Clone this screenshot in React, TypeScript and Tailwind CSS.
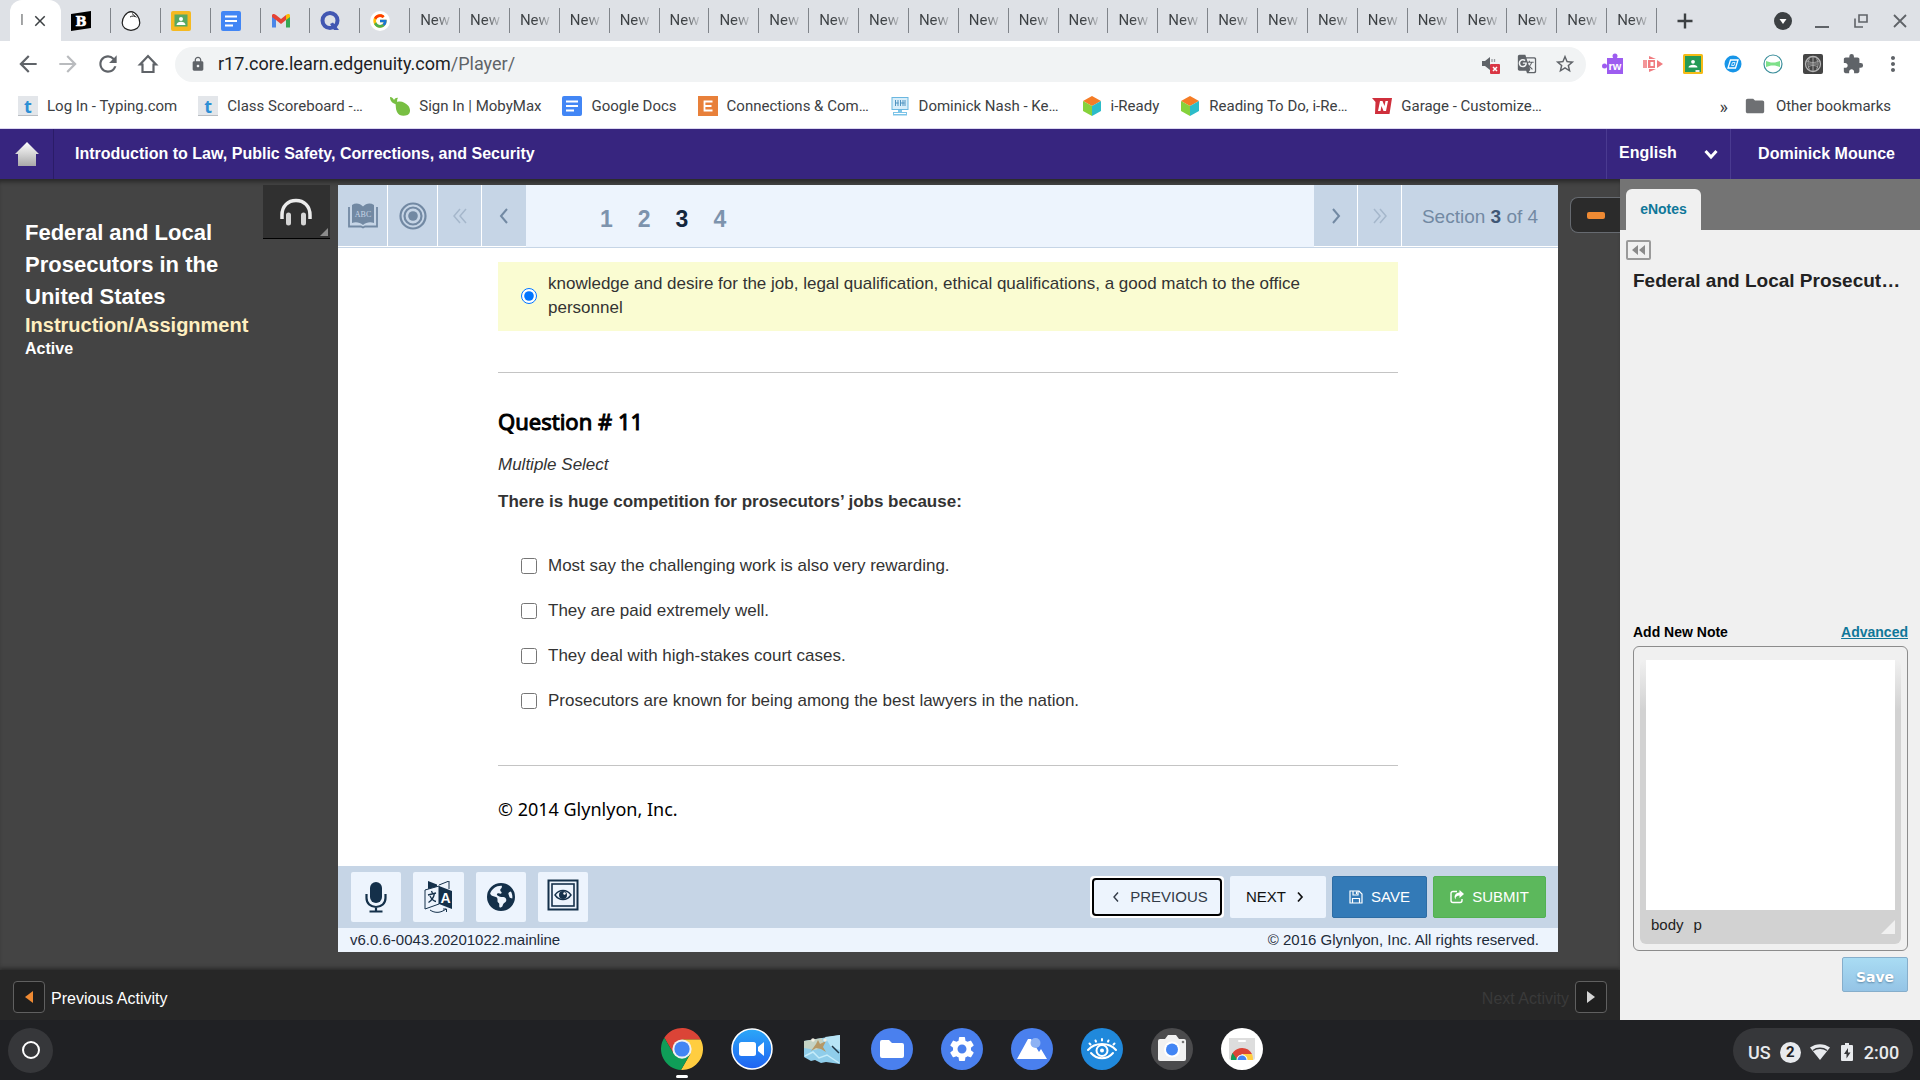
import { useState } from 'react'
import type { ReactNode } from 'react'
import { FaEarthAmericas } from 'react-icons/fa6'
import { FcGoogle } from 'react-icons/fc'
import {
  MdArrowBack,
  MdArrowForward,
  MdClose,
  MdExtension,
  MdFolder,
  MdGTranslate,
  MdLock,
  MdMoreVert,
  MdRefresh,
  MdSettings,
  MdStarBorder,
} from 'react-icons/md'

const NEW_TABS = Array.from({ length: 25 }, (_, i) => i)

const OPTIONS = [
  'Most say the challenging work is also very rewarding.',
  'They are paid extremely well.',
  'They deal with high-stakes court cases.',
  'Prosecutors are known for being among the best lawyers in the nation.',
]

/* ---------- small icons ---------- */

function DocsIcon() {
  return (
    <svg className="w-5 h-5" viewBox="0 0 20 20">
      <rect width="20" height="20" rx="2" fill="#4286f5" />
      <path d="M4 5.500h12M4 10h12M4 14.500h8" stroke="#fff" strokeWidth="2" />
    </svg>
  )
}

function ClassroomIcon() {
  return (
    <svg className="w-5 h-5" viewBox="0 0 20 20">
      <rect width="20" height="20" rx="1.5" fill="#f5bb16" />
      <rect x="2" y="2" width="16" height="16" fill="#249a55" />
      <circle cx="10" cy="7.8" r="1.9" fill="#fff" />
      <path d="M5.500 13.500c0-3.600 9-3.600 9 0z" fill="#fff" />
      <path d="M12.500 16h4v2h-4z" fill="#e8eef0" />
    </svg>
  )
}

function ClassroomTabIcon() {
  return (
    <svg className="w-5 h-5" viewBox="0 0 20 20">
      <rect width="20" height="20" rx="2" fill="#f5b921" />
      <rect x="3.500" y="3.500" width="13" height="12" fill="#57a863" />
      <circle cx="10" cy="8" r="2" fill="#fff" />
      <path d="M5.500 14c0-4.500 9-4.500 9 0z" fill="#fff" />
    </svg>
  )
}

function TypingIcon() {
  return (
    <span className="flex w-5 h-5 items-center justify-center bg-[#e3e6ea] border-b border-[#b9bdc2] text-[18px] leading-5 font-bold text-[#2d8fd5] font-['Open_Sans',sans-serif]">
      t
    </span>
  )
}

function CubeIcon() {
  return (
    <svg className="w-5 h-5" viewBox="0 0 20 20">
      <path d="M10 0l9 5-9 5-9-5z" fill="#f57c26" />
      <path d="M1 5l9 5v10l-9-5z" fill="#86d23b" />
      <path d="M19 5l-9 5v10l9-5z" fill="#2cbcc9" />
    </svg>
  )
}

function MobyIcon() {
  return (
    <svg className="w-5 h-5" viewBox="0 0 20 20">
      <path d="M0 1c2 0 3.500 1.500 4 3 1-1.500 2.500-2.500 4-2-1 1-1 2.500-.7 4 3.500-1.500 8 .5 10.700 3.500 3 3.500 2.500 8-.5 9.500-4 1.500-8.500 1-10.500-3C5.500 13 6 10 5.500 8 3 7.500 0 5.500 0 1z" fill="#78bf43" />
    </svg>
  )
}

function ComputerIcon() {
  return (
    <svg className="w-5 h-5" viewBox="0 0 20 20">
      <rect x="2" y="1.500" width="16" height="12" fill="#d8eefa" stroke="#6bb7e0" />
      <path d="M5.500 4v6M8 4v6M5.500 7h3M10.500 4v6M13 4v6M15 4v6M10.500 7h4" stroke="#4f93c0" />
      <path d="M8 14h4v2H8zM3 16h14v3.500H3z" fill="#7cc4e8" />
      <path d="M4 17.500h12" stroke="#fff" />
    </svg>
  )
}

function NitroIcon() {
  return (
    <svg className="w-5 h-5" viewBox="0 0 20 20">
      <path d="M0 2h20l-2.500 16H3L3.500 6z" fill="#cf2f3c" />
      <path d="M6 15L8 5h2.500l2 5 1-5H16l-2 10h-2.500l-2-5-1 5z" fill="#fff" />
    </svg>
  )
}

function LetterE() {
  return (
    <svg className="w-5 h-5" viewBox="0 0 20 20">
      <rect width="20" height="20" fill="#e8803a" />
      <path d="M14.500 5.500h-8v9h8M6.500 10h7" fill="none" stroke="#fff" strokeWidth="1.800" />
    </svg>
  )
}

function BlooketIcon() {
  return (
    <svg className="w-5 h-5" viewBox="0 0 20 20">
      <path d="M0 3l20-3v17L0 20z" fill="#000" />
      <text x="10" y="15" textAnchor="middle" fontSize="13" fontWeight="700" fontFamily="DejaVu Serif" fill="#fff" stroke="#fff" strokeWidth=".6">B</text>
    </svg>
  )
}

function EggIcon() {
  return (
    <svg className="w-5 h-5" viewBox="0 0 20 20">
      <path d="M10 .7C5 1 1 7 1.200 12c.2 4.500 4 7.300 8.800 7.300s8.600-2.800 8.800-7.300C19 7 15 1 10 .7z" fill="#fff" stroke="#222" strokeWidth="1.200" />
      <path d="M9 6c2-1.500 5-1 6.500.2M11 2.500l3 2.800" fill="none" stroke="#222" />
    </svg>
  )
}

function GmailIcon() {
  return (
    <svg className="w-5 h-5" viewBox="0 0 20 20">
      <path d="M1 5v11.500h4V8z" fill="#4a86e8" />
      <path d="M19 5v11.500h-4V8z" fill="#34a853" />
      <path d="M15 4v5l4-3V4.500C19 3 17 2.500 15 4z" fill="#fbbc04" />
      <path d="M1 6V4.500C1 3 3 2.500 5 4l5 4 5-4v5l-5 4-5-4z" fill="#e54335" />
    </svg>
  )
}

function QIcon() {
  return (
    <svg className="w-5 h-5" viewBox="0 0 20 20">
      <circle cx="10" cy="9.500" r="7.500" fill="none" stroke="#4257b2" strokeWidth="4" />
      <path d="M10 13l3-1.500 6 7.500h-5z" fill="#4257b2" />
    </svg>
  )
}

const ICON_TABS: { id: string; icon: ReactNode }[] = [
  { id: 'Blooket', icon: <BlooketIcon /> },
  { id: 'Egg', icon: <EggIcon /> },
  { id: 'Classroom', icon: <ClassroomTabIcon /> },
  { id: 'Docs', icon: <DocsIcon /> },
  { id: 'Gmail', icon: <GmailIcon /> },
  { id: 'Quizlet', icon: <QIcon /> },
  { id: 'Google', icon: <span className="block rounded-full bg-white p-0.5"><FcGoogle className="w-4 h-4" /></span> },
]

const BOOKMARKS: { label: string; icon: ReactNode; cut?: boolean }[] = [
  { label: 'Log In - Typing.com', icon: <TypingIcon /> },
  { label: 'Class Scoreboard -…', icon: <TypingIcon />, cut: true },
  { label: 'Sign In | MobyMax', icon: <MobyIcon /> },
  { label: 'Google Docs', icon: <DocsIcon /> },
  { label: 'Connections & Com…', icon: <LetterE />, cut: true },
  { label: 'Dominick Nash - Ke…', icon: <ComputerIcon />, cut: true },
  { label: 'i-Ready', icon: <CubeIcon /> },
  { label: 'Reading To Do, i-Re…', icon: <CubeIcon />, cut: true },
  { label: 'Garage - Customize…', icon: <NitroIcon />, cut: true },
]

const EXTENSIONS: { id: string; icon: ReactNode }[] = [
  {
    id: 'Read and write',
    icon: (
      <svg className="w-5 h-5 overflow-visible" viewBox="0 0 20 20">
        <path d="M4 4h16v16H4z" fill="#9d5cf0" />
        <circle cx="12" cy="2" r="2.500" fill="#9d5cf0" />
        <circle cx="1.500" cy="12" r="2.500" fill="#9d5cf0" />
        <text x="12" y="15.500" textAnchor="middle" fontSize="11" fontWeight="700" fontFamily="Liberation Sans" fill="#fff">rw</text>
      </svg>
    ),
  },
  {
    id: 'Screencastify',
    icon: (
      <svg className="w-5 h-5" viewBox="0 0 20 20" fill="#f07c80">
        <path d="M0 6h4v8H0z" opacity=".8" />
        <path d="M5 6h7v8H5zM7.500 8v4h3V8z" fillRule="evenodd" />
        <path d="M6 2l7 3H6zM6 18l7-3H6z" />
        <path d="M14 6l6 4-6 4z" />
      </svg>
    ),
  },
  { id: 'Share to Classroom', icon: <ClassroomIcon /> },
  {
    id: 'Nearpod',
    icon: (
      <svg className="w-5 h-5" viewBox="0 0 20 20">
        <circle cx="10" cy="10" r="8.500" fill="#1795e8" />
        <path d="M7.500 6H15l-2.500 8H5z" fill="none" stroke="#fff" strokeWidth="1.300" />
        <path d="M9.500 8.500H12l-1 3H8.500z" fill="none" stroke="#cfeaff" />
      </svg>
    ),
  },
  {
    id: 'Bow',
    icon: (
      <svg className="w-5 h-5" viewBox="0 0 20 20">
        <circle cx="10" cy="10" r="9" fill="#fff" stroke="#3d8f9c" strokeWidth="1.200" />
        <path d="M3 7l5 1.500h4L17 7v6l-5-1.500H8L3 13z" fill="#7fe08a" />
      </svg>
    ),
  },
  {
    id: 'Globe',
    icon: (
      <svg className="w-5 h-5" viewBox="0 0 20 20">
        <rect width="20" height="20" rx="2" fill="#454545" />
        <circle cx="10" cy="10" r="7.500" fill="none" stroke="#b5b5b5" strokeWidth="1.300" />
        <path d="M4 7c4 2 8 2 12 0M5 13c3-2 7-2 10 0M10 3v14M6.500 4.500c-2 4-2 7 0 11M13.500 4.500c2 4 2 7 0 11M6 10h8" fill="none" stroke="#a5a5a5" />
      </svg>
    ),
  },
  { id: 'Extensions', icon: <MdExtension className="w-[22px] h-[22px]" /> },
  { id: 'Menu', icon: <MdMoreVert className="w-6 h-6" /> },
]

function Chevron({ dir, double }: { dir: 'left' | 'right'; double?: boolean }) {
  return (
    <svg className="w-5 h-5" viewBox="0 0 20 20" fill="none" stroke="currentColor" strokeWidth="2">
      {dir === 'left' && !double && <path d="M13 3l-6 7 6 7" />}
      {dir === 'right' && !double && <path d="M7 3l6 7-6 7" />}
      {dir === 'left' && double && <path d="M10 3l-6 7 6 7M16 3l-6 7 6 7" strokeWidth="1.500" />}
      {dir === 'right' && double && <path d="M4 3l6 7-6 7M10 3l6 7-6 7" strokeWidth="1.500" />}
    </svg>
  )
}

/* ---------- browser chrome ---------- */

function TabStrip() {
  return (
    <div className="flex h-[41px] bg-[#dee1e6] text-[15px] text-[#3c4043]">
      <div className="flex flex-1 min-w-0">
        <div className="ml-[10px] w-[51px] shrink-0 rounded-t-xl bg-white flex items-center justify-between pl-[10px] pr-3">
          <span className="bg-linear-to-r from-[#3c4043] to-[#bbbbbb] bg-clip-text text-transparent">I</span>
          <button aria-label="Close tab"><MdClose className="w-[18px] h-[18px]" /></button>
        </div>
        {ICON_TABS.map(({ id, icon }) => (
          <div key={id} className="flex flex-1 min-w-0 items-center">
            <button aria-label={id} className="flex flex-1 pl-[10px]">{icon}</button>
            <span className="h-[25px] w-px bg-[#80848a]" />
          </div>
        ))}
        {NEW_TABS.map((n) => (
          <div key={n} className="flex flex-1 min-w-0 items-center">
            <button className="flex-1 min-w-0 pl-[10px] text-left">
              <span className="bg-linear-to-r from-[#3c4043] from-50% to-[#3c404333] bg-clip-text text-transparent">New</span>
            </button>
            <span className="h-[25px] w-px bg-[#80848a]" />
          </div>
        ))}
      </div>
      <div className="flex w-[263px] items-center justify-between pl-[19px] pr-[11px]">
        <button aria-label="New tab">
          <svg className="w-[18px] h-[18px]" viewBox="0 0 18 18"><path d="M9 1.500v15M1.500 9h15" stroke="#3c4043" strokeWidth="2.400" /></svg>
        </button>
        <div className="flex items-center gap-[21px]">
          <button aria-label="Search tabs">
            <svg className="w-[18px] h-[18px]" viewBox="0 0 18 18">
              <circle cx="9" cy="9" r="9" fill="#3c4043" />
              <path d="M5.500 7h7L9 12z" fill="#fff" />
            </svg>
          </button>
          <button aria-label="Minimize">
            <svg className="w-[18px] h-[18px]" viewBox="0 0 18 18"><path d="M2 15h14" stroke="#5f6368" strokeWidth="2" /></svg>
          </button>
          <button aria-label="Restore">
            <svg className="w-[18px] h-[18px]" viewBox="0 0 18 18" fill="none" stroke="#5f6368" strokeWidth="1.600">
              <path d="M7 3h8v7H7zM3 6.500V15h8" />
            </svg>
          </button>
          <button aria-label="Close">
            <svg className="w-[18px] h-[18px]" viewBox="0 0 18 18"><path d="M3 3l12 12M15 3L3 15" stroke="#5f6368" strokeWidth="1.800" /></svg>
          </button>
        </div>
      </div>
    </div>
  )
}

function AddressBar() {
  return (
    <div className="flex h-[46px] items-center bg-white text-[#5f6368] pl-[15px] pr-[7px]">
      <div className="flex gap-[14px] pr-[14px]">
        <button aria-label="Back"><MdArrowBack className="w-[26px] h-[26px]" /></button>
        <button aria-label="Forward" className="text-[#b9bbbe]"><MdArrowForward className="w-[26px] h-[26px]" /></button>
        <button aria-label="Reload"><MdRefresh className="w-[26px] h-[26px]" /></button>
        <button aria-label="Home">
          <svg className="w-[26px] h-[26px]" viewBox="0 0 26 26" fill="none" stroke="currentColor" strokeWidth="2.200">
            <path d="M5 13.500l8-8.500 8 8.500h-2.500V21h-11v-7.500z" />
          </svg>
        </button>
      </div>
      <div className="flex h-[35px] flex-1 items-center rounded-full bg-[#f1f3f4] pl-[15px] pr-[10px]">
        <MdLock className="w-4 h-4" />
        <div className="flex-1 pl-3 text-[18px] leading-6">
          <span className="text-[#202124]">r17.core.learn.edgenuity.com</span>/Player/
        </div>
        <div className="flex items-center gap-[17px]">
          <button aria-label="Sound blocked">
            <svg className="w-5 h-5" viewBox="0 0 20 20">
              <path d="M2 7h3l5-4v13l-5-4H2z" fill="#5f6368" />
              <path d="M12 5v3M14.500 5v3" stroke="#9a9da1" strokeWidth="1.300" />
              <rect x="10" y="10" width="10" height="10" rx="1" fill="#d93644" />
              <path d="M13 13l4 4M17 13l-4 4" stroke="#fff" strokeWidth="1.500" />
            </svg>
          </button>
          <button aria-label="Translate"><MdGTranslate className="w-5 h-5" /></button>
          <button aria-label="Bookmark"><MdStarBorder className="w-[22px] h-[22px]" /></button>
        </div>
      </div>
      <div className="flex pl-[7px]">
        {EXTENSIONS.map(({ id, icon }) => (
          <button key={id} aria-label={id} className="flex w-10 items-center justify-center">{icon}</button>
        ))}
      </div>
    </div>
  )
}

function BookmarkBar() {
  return (
    <div className="flex h-[42px] items-center justify-between border-b border-[#dcd7f0] bg-white pl-[18px] pr-[29px] pb-[3px] text-[15px] text-[#3c4043]">
      <div className="flex gap-[21px]">
        {BOOKMARKS.map(({ label, icon, cut }) => (
          <a key={label} href="#" className="flex items-center gap-[9px] whitespace-nowrap">
            {icon}
            <span className={cut ? 'w-[142px]' : ''}>{label}</span>
          </a>
        ))}
      </div>
      <div className="flex items-center gap-4">
        <button aria-label="More bookmarks" className="text-[18px]">»</button>
        <a href="#" className="flex items-center gap-[10px]">
          <MdFolder className="w-[22px] h-[22px] text-[#6e7073]" />
          Other bookmarks
        </a>
      </div>
    </div>
  )
}

/* ---------- course player ---------- */

function CourseHeader() {
  return (
    <header className="flex h-[50px] items-stretch bg-[#37257f] text-[16px] font-bold text-white">
      <a href="#" aria-label="Home" className="flex w-[54px] items-center justify-center border-r border-[#2b1c68]">
        <svg className="w-6 h-6" viewBox="0 0 24 24">
          <defs>
            <linearGradient id="roof" x1="0" y1="0" x2="0" y2="1">
              <stop offset="0" stopColor="#fff" />
              <stop offset="1" stopColor="#a9a9a9" />
            </linearGradient>
          </defs>
          <path d="M12 0l12 12h-3v12H3V12H0z" fill="url(#roof)" />
        </svg>
      </a>
      <h1 className="flex-1 self-center pl-[21px]">Introduction to Law, Public Safety, Corrections, and Security</h1>
      <label className="relative flex w-[125px] items-center border-x border-[#4a3a90]">
        <span className="sr-only">Language</span>
        <select className="h-full w-full appearance-none pl-3 pb-0.5 font-bold outline-none">
          <option>English</option>
        </select>
        <svg className="pointer-events-none absolute right-3 w-[14px] h-[14px]" viewBox="0 0 14 14" fill="none" stroke="#fff" strokeWidth="3">
          <path d="M1.500 4L7 10l5.500-6" />
        </svg>
      </label>
      <span className="self-center pl-[27px] pr-[25px]">Dominick Mounce</span>
    </header>
  )
}

function LessonInfo() {
  return (
    <aside className="flex w-[338px] shrink-0 items-start justify-between pl-[25px] pr-2">
      <div className="pt-8 font-bold text-white">
        <h2 className="w-[220px] text-[22px] leading-8">Federal and Local Prosecutors in the United States</h2>
        <p className="text-[20px] leading-6 text-[#ffefc0]">Instruction/Assignment</p>
        <p className="text-[16px] leading-6">Active</p>
      </div>
      <button aria-label="Audio" className="relative -ml-4 flex h-[54px] w-[67px] shrink-0 items-center justify-center border-b border-black bg-[#303030] pr-0.5">
        <svg className="w-8 h-7" viewBox="0 0 32 28" fill="none">
          <path d="M2 21v-4C2 8 8 2.500 16 2.500S30 8 30 17v4" stroke="#ececec" strokeWidth="3.500" />
          <path d="M8.500 17v8M23.500 17v8" stroke="#d5d5d5" strokeWidth="5" strokeLinecap="round" />
        </svg>
        <svg className="absolute right-0.5 bottom-0.5 w-2 h-2" viewBox="0 0 8 8"><path d="M8 0v8H0z" fill="#8c8c8c" /></svg>
      </button>
    </aside>
  )
}

function PlayerToolbar() {
  const [page, setPage] = useState(3)

  return (
    <div className="flex h-[63px] shrink-0 border-b border-[#c6d5e6] bg-[#edf4fd] text-[#7289a3]">
      <div className="flex gap-px bg-white pb-px">
        <button aria-label="Dictionary" className="flex w-[49px] items-center justify-center bg-[#c6d5e6]">
          <svg className="w-[30px] h-[26px]" viewBox="0 0 30 26">
            <path d="M4 2c4-2.500 8-1.500 11 1.500C18 .5 22-.5 26 2v18c-4-1.500-8-.5-11 2-3-2.500-7-3.500-11-2z" fill="#7289a3" />
            <path d="M1 4v19.500h12l2 1 2-1h12V4" fill="none" stroke="#7289a3" strokeWidth="1.800" />
            <text x="15" y="14" textAnchor="middle" fontSize="8" fontFamily="Liberation Serif" fill="#c6d5e6">ABC</text>
          </svg>
        </button>
        <button aria-label="Objectives" className="flex w-[49px] items-center justify-center bg-[#c6d5e6]">
          <svg className="w-7 h-7" viewBox="0 0 28 28" fill="none" stroke="#7289a3">
            <circle cx="14" cy="14" r="12.500" strokeWidth="2.200" />
            <circle cx="14" cy="14" r="8.500" strokeWidth="2.200" />
            <circle cx="14" cy="14" r="4.800" fill="#7289a3" stroke="none" />
          </svg>
        </button>
        <button aria-label="First" className="flex w-[43px] items-center justify-center bg-[#c6d5e6] text-[#a5b7cb]"><Chevron dir="left" double /></button>
        <button aria-label="Previous section" className="flex w-[44px] items-center justify-center bg-[#c6d5e6]"><Chevron dir="left" /></button>
      </div>
      <nav className="flex flex-1 items-center gap-[25px] pt-1.5 pl-[74px] text-[23px] font-bold">
        {[1, 2, 3, 4].map((n) => (
          <button key={n} onClick={() => setPage(n)} className={n === page ? 'text-[#14273d]' : 'text-[#7d93ad]'}>{n}</button>
        ))}
      </nav>
      <div className="flex gap-px bg-white pb-px">
        <button aria-label="Next section" className="flex w-[43px] items-center justify-center bg-[#c6d5e6]"><Chevron dir="right" /></button>
        <button aria-label="Last" className="flex w-[43px] items-center justify-center bg-[#c6d5e6] text-[#a5b7cb]"><Chevron dir="right" double /></button>
        <div className="flex w-[156px] items-center justify-center bg-[#c6d5e6] pt-1 text-[19px]">
          <span>Section <b className="text-[#3f5775]">3</b> of 4</span>
        </div>
      </div>
    </div>
  )
}

function Question() {
  return (
    <div className="flex-1 overflow-hidden bg-white px-40 pt-[14px] text-[17px] leading-6 text-[#333333]">
      <label className="flex items-center gap-[11px] bg-[#fafcd2] pt-[10px] pr-10 pb-[11px] pl-[23px]">
        <input type="radio" name="q10" defaultChecked className="w-4 h-4 shrink-0" />
        knowledge and desire for the job, legal qualification, ethical qualifications, a good match to the office personnel
      </label>
      <hr className="mt-[41px] border-[#c4c4c4]" />
      <h2 className="mt-8 font-['Noto_Sans',sans-serif] text-[22px] leading-8 text-black [-webkit-text-stroke:1px_black]">Question # 11</h2>
      <p className="mt-4 italic">Multiple Select</p>
      <p className="mt-[13px] font-bold">There is huge competition for prosecutors’ jobs because:</p>
      <div className="mt-10 flex flex-col items-start gap-[21px] pl-[23px]">
        {OPTIONS.map((text) => (
          <label key={text} className="flex items-center gap-[11px]">
            <input type="checkbox" className="w-4 h-4 shrink-0" />
            {text}
          </label>
        ))}
      </div>
      <hr className="mt-[52px] border-[#c4c4c4]" />
      <p className="mt-[31px] font-['Noto_Sans',sans-serif] text-[18px] text-black">© 2014 Glynlyon, Inc.</p>
    </div>
  )
}

function PlayerActions() {
  return (
    <div className="flex h-[62px] shrink-0 items-center justify-between bg-[#c6d5e6] pl-[13px] pr-3 text-[15px]">
      <div className="flex gap-3 text-[#14304a]">
        <button aria-label="Record" className="flex h-[50px] w-[50px] items-center justify-center rounded-xs bg-[#edf4fd]">
          <svg className="w-[22px] h-8" viewBox="0 0 22 32">
            <rect x="5" y="1" width="12" height="21" rx="6" fill="currentColor" />
            <path d="M1.500 13v4c0 5.500 4 9 9.500 9s9.500-3.500 9.500-9v-4M11 26v4.500M4.500 30.500h13" fill="none" stroke="currentColor" strokeWidth="2.200" />
          </svg>
        </button>
        <button aria-label="Translate" className="flex h-[50px] w-[51px] items-center justify-center rounded-xs bg-[#edf4fd]">
          <svg className="w-8 h-8" viewBox="0 0 32 32">
            <path d="M16 5l13 5v18l-13-5z" fill="#14304a" />
            <path d="M16 5L2 9v19l14-5z" fill="#edf4fd" stroke="#14304a" />
            <path d="M5 0l9 3.500v2L5 8z" fill="#14304a" />
            <path d="M16 4l10-4v8" fill="none" stroke="#14304a" />
            <path d="M5 14l8-2M8.500 10l1 2.500M11.500 12.500c-1 5-3 7-6 9M7 15c1.500 3 3.500 5 6 5.500" fill="none" stroke="#14304a" strokeWidth="1.300" />
            <text x="22.500" y="22" textAnchor="middle" fontSize="14" fontWeight="700" fontFamily="Liberation Sans" fill="#fff">A</text>
            <path d="M7 29c5 3.500 11 3 16-1M20 28h3.500v3" fill="none" stroke="#14304a" />
          </svg>
        </button>
        <button aria-label="Web" className="flex h-[50px] w-[50px] items-center justify-center rounded-xs bg-[#edf4fd]"><FaEarthAmericas className="w-7 h-7" /></button>
        <button aria-label="Masking" className="flex h-[50px] w-[50px] items-center justify-center rounded-xs bg-[#edf4fd] pb-1">
          <svg className="w-8 h-8" viewBox="0 0 32 32" fill="none" stroke="#14304a">
            <rect x="1.500" y="1.500" width="29" height="29" strokeWidth="2" />
            <rect x="5" y="5" width="22" height="22" strokeWidth="1.600" />
            <path d="M8 16c4-6 12-6 16 0-4 6-12 6-16 0z" strokeWidth="1.400" />
            <circle cx="16" cy="16" r="4" fill="#14304a" stroke="none" />
            <circle cx="17.500" cy="14.500" r="1.200" fill="#fff" stroke="none" />
          </svg>
        </button>
      </div>
      <div className="flex gap-1.5">
        <button className="h-[42px] w-[134px] rounded-sm bg-white p-0.5 text-[#333b47]">
          <span className="flex h-full items-center justify-center gap-[10px] rounded-sm border-2 border-black bg-[#edf4fd] pl-1.5">
            <svg className="w-2 h-3" viewBox="0 0 8 12"><path d="M6 1.500L2 6l4 4.500" fill="none" stroke="currentColor" strokeWidth="1.400" /></svg>
            PREVIOUS
          </span>
        </button>
        <button className="flex h-[42px] w-[96px] items-center justify-center gap-[10px] rounded-xs bg-[#edf4fd] pr-1.5 text-[#111111]">
          NEXT
          <svg className="w-2 h-3" viewBox="0 0 8 12"><path d="M2 1.500L6 6l-4 4.500" fill="none" stroke="currentColor" strokeWidth="1.700" /></svg>
        </button>
        <button className="flex h-[42px] w-[95px] items-center justify-center gap-2 rounded-xs border border-[#2e6da4] bg-[#337ab7] text-white">
          <svg className="w-[14px] h-[14px]" viewBox="0 0 14 14" fill="none" stroke="#fff" strokeWidth="1.200">
            <path d="M1 1h9l3 3v9H1zM4 1v4h5V1M3.500 13V8.500h7V13" />
            <path d="M7.500 1.500v2.500" />
          </svg>
          SAVE
        </button>
        <button className="flex h-[42px] w-[113px] items-center justify-center gap-2 rounded-xs border border-[#53b153] bg-[#5cb85c] text-white">
          <svg className="w-[14px] h-[14px]" viewBox="0 0 14 14">
            <path d="M7 1.500H3A2 2 0 0 0 1 3.500v7A2 2 0 0 0 3 12.500h7a2 2 0 0 0 2-2V9" fill="none" stroke="#fff" strokeWidth="1.400" />
            <path d="M9.500 0L14 4 9.500 8V5.500C7 5.500 5.500 6.500 5.500 9.500 3.500 6.500 5 2.800 9.500 2.600z" fill="#fff" />
          </svg>
          SUBMIT
        </button>
      </div>
    </div>
  )
}

function ActivityFooter() {
  return (
    <footer className="flex h-[50px] shrink-0 items-center justify-between bg-[#272727] px-[13px] pt-1 text-[16px] shadow-[0_-2px_4px_rgba(0,0,0,0.4)]">
      <button className="flex items-center gap-1.5 text-white">
        <span className="flex h-8 w-8 items-center justify-center rounded-sm border border-[#606060] bg-[#1f1f1f]">
          <svg className="w-2 h-3" viewBox="0 0 8 12"><path d="M8 0v12L0 6z" fill="#ef8a33" /></svg>
        </span>
        <span className="pt-[3px]">Previous Activity</span>
      </button>
      <button disabled className="flex items-center gap-1.5 text-[#3a3a3a]">
        <span className="pt-[3px]">Next Activity</span>
        <span className="flex h-8 w-8 items-center justify-center rounded-sm border border-[#606060] bg-[#1f1f1f]">
          <svg className="w-2 h-3" viewBox="0 0 8 12"><path d="M0 0v12l8-6z" fill="#d5d5d5" /></svg>
        </span>
      </button>
    </footer>
  )
}

function NotesPanel() {
  return (
    <section className="flex w-[300px] shrink-0 flex-col bg-[#f0f0f0]">
      <div className="flex h-[51px] items-end bg-[#747474] pl-1.5">
        <button className="h-[41px] w-[75px] rounded-t-md bg-[#f0f0f0] text-[14px] font-bold text-[#0f7799]">eNotes</button>
      </div>
      <div className="flex flex-1 flex-col pr-3 pb-7 pl-[13px]">
        <button aria-label="Collapse" className="mt-[10px] -ml-[7px] flex h-5 w-[25px] items-center justify-center rounded-xs border-2 border-[#9a9a9a]">
          <svg className="w-[13px] h-2.5" viewBox="0 0 13 10"><path d="M6 0v10L0 5zM13 0v10L7 5z" fill="#8a8a8a" /></svg>
        </button>
        <h2 className="mt-[9px] truncate text-[19px] leading-6 font-bold text-[#222222]">Federal and Local Prosecut…</h2>
        <div className="mt-auto flex justify-between text-[14px] leading-5 font-bold">
          <label htmlFor="note" className="text-black">Add New Note</label>
          <a href="#" className="text-[#0f7799] underline">Advanced</a>
        </div>
        <div className="mt-1 rounded-md border border-[#8c8c8c] px-1.5 pt-[13px] pb-1.5">
          <div className="rounded-md bg-linear-to-b from-[#f0f0f0] to-[#d2d2d2] to-[50px] px-1.5">
            <textarea id="note" className="block h-[250px] w-full resize-none bg-white outline-none" />
            <div className="flex h-[34px] items-center justify-between pl-[5px] text-[15px] text-[#222222]">
              <span className="flex gap-[10px] pb-1"><span>body</span><span>p</span></span>
              <svg className="w-[14px] h-[14px]" viewBox="0 0 14 14"><path d="M14 0v14H0z" fill="#f0f0f0" /></svg>
            </div>
          </div>
        </div>
        <button className="mt-1.5 h-[35px] w-[66px] self-end rounded-xs border border-[#86aecb] bg-linear-to-b from-[#a9dcf3] to-[#95c4e6] pt-1.5 font-['DejaVu_Sans',sans-serif] text-[14px] font-bold text-white [text-shadow:0_1px_2px_#5c87a6]">Save</button>
      </div>
    </section>
  )
}

/* ---------- ChromeOS shelf ---------- */

function Shelf() {
  return (
    <div className="grid h-[60px] shrink-0 grid-cols-[1fr_auto_1fr] items-center bg-[#202124] pr-[7px] pl-2 font-[Roboto,sans-serif]">
      <button aria-label="Launcher" className="flex h-[45px] w-[45px] items-center justify-center rounded-full bg-[#36373a]">
        <span className="h-[18px] w-[18px] rounded-full border-2 border-white" />
      </button>
      <div className="flex gap-7 pr-0 pb-0.5 pl-0.5">
        <button aria-label="Chrome" className="relative">
          <svg className="w-[42px] h-[42px]" viewBox="0 0 48 48">
            <path d="M3.810 11.030A24 24 0 0 1 45.330 13H24L14.470 29.500z" fill="#db4437" />
            <path d="M45.330 13A24 24 0 0 1 22.860 47.970L33.530 29.500 24 13z" fill="#ffcd40" />
            <path d="M22.860 47.970A24 24 0 0 1 3.810 11.030L14.470 29.500h19.060z" fill="#0f9d58" />
            <circle cx="24" cy="24" r="11" fill="#f1f1f1" />
            <circle cx="24" cy="24" r="8.700" fill="#4285f4" />
          </svg>
          <span className="absolute -bottom-2 left-[15px] h-[3px] w-3 rounded-full bg-white" />
        </button>
        <button aria-label="Zoom">
          <svg className="w-[42px] h-[42px]" viewBox="0 0 42 42">
            <defs>
              <linearGradient id="zoom" x1="0" y1="0" x2="0" y2="1">
                <stop offset="0" stopColor="#2ba7f8" />
                <stop offset="1" stopColor="#1f63f2" />
              </linearGradient>
            </defs>
            <circle cx="21" cy="21" r="20" fill="url(#zoom)" stroke="#fff" strokeWidth="1.500" />
            <rect x="8" y="14" width="17" height="14" rx="2.500" fill="#fff" />
            <path d="M27 19l6-5v14l-6-5z" fill="#fff" />
          </svg>
        </button>
        <button aria-label="Game">
          <svg className="w-[42px] h-[42px]" viewBox="0 0 42 42">
            <path d="M3 13L39 7v29l-14-2-5 1-6-3-4 1-7-4z" fill="#8fcdea" />
            <path d="M3 13l18-3 2 7-8 5-12-2z" fill="#c5d3c4" />
            <path d="M24 9l15-2v15l-9-3z" fill="#b7e4f6" />
            <path d="M10 23l5-7 2-4 2 4 6-3-3 6 3 5-5-3-5-1z" fill="#b69865" />
            <circle cx="12" cy="12" r="1.800" fill="#f3efe3" />
            <circle cx="24" cy="12" r="1.800" fill="#f3efe3" />
            <path d="M31 18l7 7" stroke="#1f3545" strokeWidth="1.500" />
            <path d="M4 28l8-4 6 6 8-3 12 8" fill="none" stroke="#c5ecfa" strokeWidth="1.500" />
          </svg>
        </button>
        <button aria-label="Files">
          <svg className="w-[42px] h-[42px]" viewBox="0 0 42 42">
            <circle cx="21" cy="21" r="21" fill="#4a80ee" />
            <path d="M9 14a2 2 0 0 1 2-2h7l3 3h10a2 2 0 0 1 2 2v11a2 2 0 0 1-2 2H11a2 2 0 0 1-2-2z" fill="#fff" />
          </svg>
        </button>
        <button aria-label="Settings" className="flex h-[42px] w-[42px] items-center justify-center rounded-full bg-[#4a80ee] text-white">
          <MdSettings className="w-[30px] h-[30px]" />
        </button>
        <button aria-label="Gallery">
          <svg className="w-[42px] h-[42px]" viewBox="0 0 42 42">
            <circle cx="21" cy="21" r="21" fill="#4a80ee" />
            <path d="M6 31l11-20h3l8 13 2-3 6 10z" fill="#fff" />
            <circle cx="24.500" cy="15" r="5" fill="#8db2f4" />
          </svg>
        </button>
        <button aria-label="Eye">
          <svg className="w-[42px] h-[42px]" viewBox="0 0 42 42" fill="none" stroke="#fff" strokeWidth="2" strokeLinecap="round">
            <circle cx="21" cy="21" r="21" fill="#2089dc" stroke="none" />
            <path d="M7 22c7-8 21-8 28 0M10 25c6 7 16 7 22 0" />
            <circle cx="21" cy="22.500" r="5.500" />
            <circle cx="21" cy="22.500" r="1" fill="#fff" />
            <path d="M21 11v1.500M14.500 12.500l.5 1.200M27.500 12.500l-.5 1.200M8.500 15.500l1 1M33.500 15.500l-1 1" />
          </svg>
        </button>
        <button aria-label="Camera">
          <svg className="w-[42px] h-[42px]" viewBox="0 0 42 42">
            <circle cx="21" cy="21" r="21" fill="#4b4b4d" />
            <path d="M7 13a2 2 0 0 1 2-2h5l3-4h8l3 4h5a2 2 0 0 1 2 2v18a2 2 0 0 1-2 2H9a2 2 0 0 1-2-2z" fill="#f1f1f1" />
            <circle cx="21" cy="21.500" r="8" fill="#fff" />
            <circle cx="21" cy="21.500" r="6" fill="#4285f4" />
            <circle cx="32" cy="14" r="1.300" fill="#777777" />
          </svg>
        </button>
        <button aria-label="Web Store">
          <svg className="w-[42px] h-[42px]" viewBox="0 0 42 42">
            <circle cx="21" cy="21" r="21" fill="#fff" />
            <path d="M8 10h26v20a2 2 0 0 1-2 2H10a2 2 0 0 1-2-2z" fill="#dddddd" />
            <path d="M18 13h6" stroke="#fff" strokeWidth="2" strokeLinecap="round" />
            <path d="M21 20a11 11 0 0 1 10 6H21l-5 6h-6A11 11 0 0 1 21 20z" fill="#db4437" />
            <path d="M11.500 25l5 7h-6.500c0-3 .5-5 1.500-7z" fill="#0f9d58" />
            <path d="M22 26h9c.8 2 1 4 1 6h-7z" fill="#ffcd40" />
            <path d="M15.500 32a5.500 5.500 0 0 1 11 0z" fill="#fff" />
            <path d="M16.500 32a4.500 4.500 0 0 1 9 0z" fill="#4285f4" />
          </svg>
        </button>
      </div>
      <button className="flex h-[45px] w-[180px] items-center gap-[9px] justify-self-end rounded-full bg-[#36373a] pt-1 pl-[15px] text-[18px] font-medium text-[#e8eaed]">
        <span>US</span>
        <span className="flex h-[21px] w-[21px] items-center justify-center rounded-full bg-[#e8eaed] text-[15px] font-bold text-[#202124]">2</span>
        <svg className="w-5 h-4" viewBox="0 0 20 16">
          <path d="M0 3.500C6-1 14-1 20 3.500L10 16z" fill="#e8eaed" />
          <path d="M3 6.500c4-3 10-3 14 0" fill="none" stroke="#36373a" strokeWidth="1.400" />
        </svg>
        <svg className="mx-0.5 w-3 h-[18px]" viewBox="0 0 12 18">
          <path d="M4 0h4v2h3a1 1 0 0 1 1 1v14a1 1 0 0 1-1 1H1a1 1 0 0 1-1-1V3a1 1 0 0 1 1-1h3z" fill="#e8eaed" />
          <path d="M7 5l-4 6h2.500v4.500l4-6H7z" fill="#36373a" />
        </svg>
        <span>2:00</span>
      </button>
    </div>
  )
}

export default function App() {
  return (
    <div className="flex min-h-screen flex-col bg-[#444444] font-['Liberation_Sans',Arial,sans-serif]">
      <div className="font-[Roboto,sans-serif]">
        <TabStrip />
        <AddressBar />
        <BookmarkBar />
      </div>
      <CourseHeader />

      <main className="flex flex-1">
        <div className="flex min-w-0 flex-1 flex-col">
          <div className="flex flex-1 pt-1.5 pb-[18px] shadow-[inset_0_5px_4px_-2px_rgba(0,0,0,0.4)]">
            <LessonInfo />
            <div className="flex min-w-0 flex-1 flex-col">
              <PlayerToolbar />
              <Question />
              <PlayerActions />
              <div className="flex h-6 shrink-0 items-center justify-between bg-[#edf4fd] pl-3 pr-[19px] text-[15px] text-[#1d2b3a]">
                <span>v6.0.6-0043.20201022.mainline</span>
                <span>© 2016 Glynlyon, Inc. All rights reserved.</span>
              </div>
            </div>
            <div className="w-[62px] shrink-0 pt-3 pl-3">
              <button aria-label="Hide notes" className="flex h-9 w-full items-center justify-center rounded-l-lg border border-r-0 border-[#666a70] bg-[#2b2b2b]">
                <span className="h-[7px] w-[18px] rounded-xs bg-[#ef8a33]" />
              </button>
            </div>
          </div>
          <ActivityFooter />
        </div>
        <NotesPanel />
      </main>

      <Shelf />
    </div>
  )
}
